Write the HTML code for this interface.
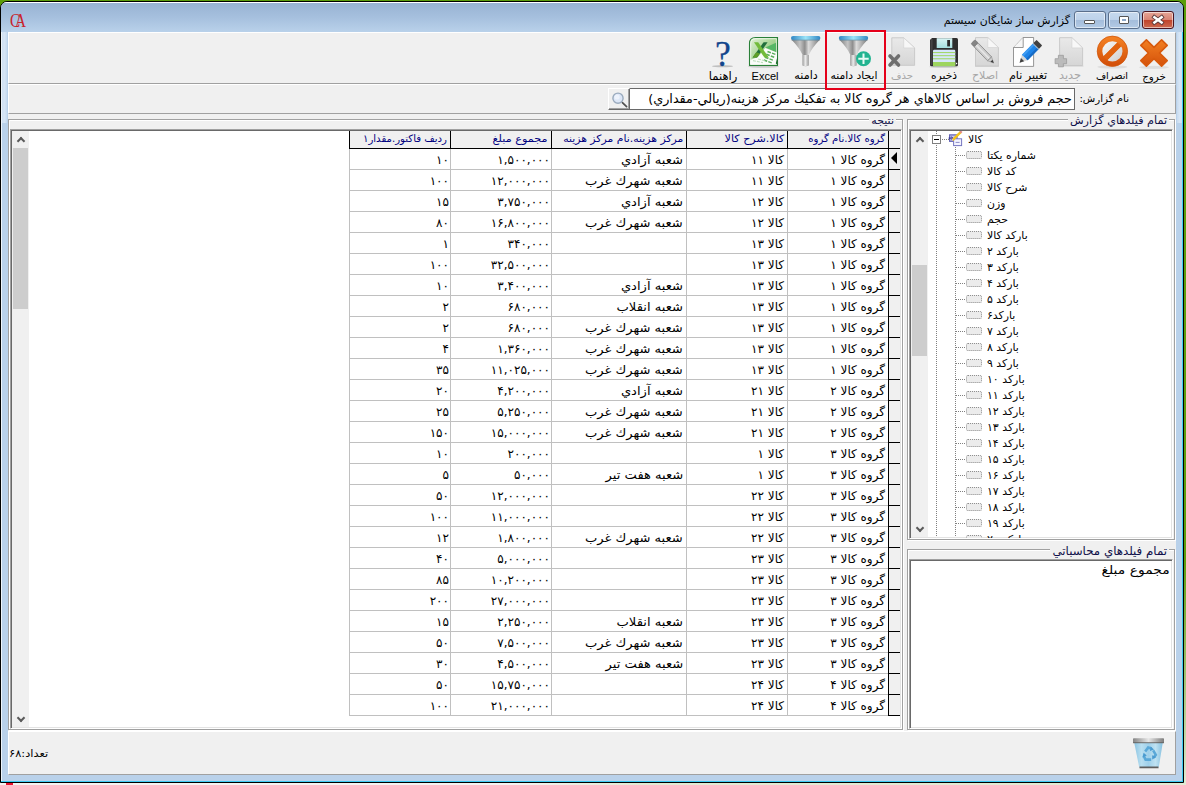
<!DOCTYPE html>
<html lang="fa"><head><meta charset="utf-8"><title>گزارش ساز شايگان سيستم</title>
<style>
html,body{margin:0;padding:0}
body{width:1186px;height:785px;overflow:hidden;position:relative;background:linear-gradient(#5b9d0a 0,#5b9d0a 560px,#cfe0bb 760px,#e2ebd5 785px);font-family:"DejaVu Sans","Liberation Sans",sans-serif;font-size:10.8px;color:#000;direction:rtl}
div,span,i,b,svg{position:absolute;box-sizing:border-box}
i,b{display:block;font-style:normal}
.win{left:0;top:1px;width:1184px;height:782px;background:#b9d1ea;border:1px solid #000;border-radius:7px 7px 0 0;overflow:hidden;box-shadow:inset -1px -1px 0 #3ecbf3,inset 1px 0 0 rgba(255,255,255,.75)}
.cap{left:0;top:0;width:1182px;height:30px;background:linear-gradient(#98b3d3,#a6c0de 50%,#b9d1ea);border-top:1px solid #fff}
.cli{left:8px;top:32px;width:1168px;height:743px;background:#f0f0f0}
.ttl{right:116px;top:13px;font-size:10.9px;line-height:16px;white-space:nowrap}
.cb{top:11px;width:32px;height:18px;border:1px solid #5a6f8c;border-radius:3px;background:linear-gradient(#c6d9ee 0,#bdd2ea 48%,#a4bddb 52%,#b3cae5 100%);box-shadow:inset 0 0 0 1px rgba(255,255,255,.55)}
.cb.x{border-color:#4b1520;background:linear-gradient(#e5a597 0,#d98474 48%,#c0432b 52%,#cd6a50 100%)}
.sep{left:8px;width:1168px;height:2px;border-top:1px solid #a0a0a0;border-bottom:1px solid #fff}
.tl{top:69px;height:14px;line-height:14px;font-size:10.8px;white-space:nowrap;text-align:center;transform:translateX(50%)}
.tl.d{color:#a7a7a7}
.gb{border:1px solid #a0a0a0;box-shadow:inset 1px 1px 0 #fff,1px 1px 0 #fff}
.gbl{background:#f0f0f0;font-size:11px;line-height:14px;height:13px;white-space:nowrap;color:#10104a;padding:0 2px}
.grid{left:10px;top:129px;width:892px;height:600px;background:#fff;border:1px solid;border-color:#a0a0a0 #fff #fff #a0a0a0;box-shadow:inset 1px 1px 0 #696969,inset -1px -1px 0 #e3e3e3;overflow:hidden}
.grid>*{margin:1px}
.sb{width:17px;background:#f0f0f0}
.sb b{left:1px;width:15px;background:#cdcdcd}
.sb i{left:0;width:17px;height:17px}
.sb i.au{top:0}.sb i.ad{bottom:0}
.sb i::before{content:"";position:absolute;left:5.5px;width:4px;height:4px;border:solid #5a5a5a;border-width:2px 2px 0 0}
.sb i.au::before{top:7.2px;transform:rotate(-45deg)}
.sb i.ad::before{top:4.6px;transform:rotate(135deg)}
.hd{top:0;height:17px;background:#f0f0f0;border-right:0;box-shadow:1px 0 0 #000,0 1px 0 #000,1px 1px 0 #000;color:#000080;font-size:10.15px;line-height:16px;text-align:right;padding-right:3px;white-space:nowrap;overflow:hidden}
.hi{left:877px;width:11px;background:#f0f0f0;box-shadow:0 1px 0 #000,-1px 0 0 #000,-1px 1px 0 #000}
.r{left:337px;width:551px;height:21px;border-bottom:1px solid #c0c0c0}
.c{top:0;height:20px;line-height:22px;font-size:12px;white-space:nowrap;text-align:right;padding-right:3px;border-left:1px solid #c0c0c0;overflow:hidden}
.c5{left:0;width:101px}.c4{left:101px;width:101px}.c3{left:202px;width:135px}.c2{left:337px;width:101px}.c1{left:438px;width:101px}
.ind{left:539px;top:0;width:12px;height:21px;background:#f0f0f0;border-left:1px solid #000;border-bottom:1px solid #000}
.cur{left:2px;top:3px;width:0;height:0;border:6px solid transparent;border-right:6px solid #000;border-left:0}
.tree{left:909px;top:129px;width:264px;height:410px;background:#fff;border:1px solid;border-color:#a0a0a0 #fff #fff #a0a0a0;box-shadow:inset 1px 1px 0 #696969,inset -1px -1px 0 #e3e3e3;overflow:hidden}
.tree>*{margin:1px}
.tr{left:0;width:262px;height:16px}
.tt{top:1px;height:16px;line-height:16px;font-size:10.9px;white-space:nowrap;direction:rtl}
.vl{width:1px;background:repeating-linear-gradient(#808080 0,#808080 1px,transparent 1px,transparent 2px)}
.hl{top:8px;height:1px;background:repeating-linear-gradient(90deg,#808080 0,#808080 1px,transparent 1px,transparent 2px)}
.pm{left:21px;top:4px;width:9px;height:9px;border:1px solid #808080;background:#fff}
.pm::before{content:"";position:absolute;left:1px;top:3px;width:5px;height:1px;background:#000}
.fi{left:55px;top:4px;width:16px;height:8px;border:1px dotted #8f8f8f;border-radius:2px;background:#ececec}
.lb{left:909px;top:559px;width:264px;height:170px;background:#fff;border:1px solid;border-color:#a0a0a0 #fff #fff #a0a0a0;box-shadow:inset 1px 1px 0 #696969,inset -1px -1px 0 #e3e3e3}
.c4,.c5{letter-spacing:.85px;padding-right:1px}
.c3 u{display:inline-block;text-decoration:none;transform:scaleX(1.09);transform-origin:100% 50%}
.c2 s{text-decoration:none;letter-spacing:.9px}
.hx{display:inline-block;transform-origin:100% 50%}
.pn{left:8px;width:1168px;border:1px solid;border-color:#fff #a0a0a0 #a0a0a0 #fff}

</style></head>
<body>
<div class="win"><div class="cap"></div></div>
<div class="cli"></div>
<div style="left:10px;top:10.5px;font-family:'Liberation Serif',serif;font-size:19px;line-height:20px;color:#c8232c;direction:ltr;letter-spacing:-6.4px;transform:scaleX(.8);transform-origin:0 50%">CA</div>
<div class="ttl">گزارش ساز شايگان سيستم</div>
<div class="cb" style="left:1074px"><i style="left:9px;top:8px;width:11px;height:4px;background:#fff;border:1px solid #555;border-radius:1px"></i></div>
<div class="cb" style="left:1108px"><i style="left:10px;top:4px;width:10px;height:8px;background:#fff;border:1px solid #555;border-radius:1px"></i><i style="left:13px;top:7px;width:4px;height:2px;background:#8aa5c7;border:0"></i></div>
<div class="cb x" style="left:1142px"><svg width="14" height="12" viewBox="0 0 14 12" style="left:8px;top:2px"><path d="M3.4 3.2L10.6 8.6M10.6 3.2L3.4 8.6" stroke="#5a3a3a" stroke-width="4.2" stroke-linecap="square"/><path d="M3.4 3.2L10.6 8.6M10.6 3.2L3.4 8.6" stroke="#fff" stroke-width="2.5" stroke-linecap="square"/></svg></div>
<div class="pn" style="top:32px;height:52px"></div>
<div class="pn" style="top:84px;height:30px"></div>
<div class="pn" style="top:731px;height:44px"></div>
<div style="left:2px;top:32px;width:5px;height:91px;background:linear-gradient(90deg,#cfe0f2,#d6e5f5 50%,#c6daef)"></div><div style="left:1177px;top:32px;width:5px;height:91px;background:linear-gradient(90deg,#c6daef,#d6e5f5 50%,#cfe0f2)"></div>
<div class="tl" style="right:32px;font-size:10.27px">خروج</div>
<div class="tl" style="right:74px;font-size:9.79px">انصراف</div>
<div class="tl d" style="right:116px;font-size:11.3px">جديد</div>
<div class="tl" style="right:158px;font-size:11.12px">تغيير نام</div>
<div class="tl d" style="right:201px;font-size:11.06px">اصلاح</div>
<div class="tl" style="right:242px;font-size:10.66px">ذخيره</div>
<div class="tl d" style="right:284px;font-size:10.1px">حذف</div>
<div class="tl" style="right:332px;font-size:10.79px">ايجاد دامنه</div>
<div class="tl" style="right:380px;font-size:11.21px">دامنه</div>
<div class="tl" style="right:421px;font-family:'Liberation Sans',sans-serif;font-size:11px;direction:ltr">Excel</div>
<div class="tl" style="right:463px;font-size:11.61px">راهنما</div>
<div style="right:57px;top:92px;font-size:10.2px;line-height:14px;white-space:nowrap">نام گزارش:</div>
<div style="left:629px;top:88px;width:446px;height:22px;background:#fff;border:1px solid #696969;font-size:12.8px;line-height:19px;padding-right:2px;white-space:nowrap;overflow:hidden">حجم فروش بر اساس کالاهاي هر گروه کالا به تفکيك مرکز هزينه(ريالي-مقداري)</div>
<div style="left:608px;top:88px;width:22px;height:22px;background:#f0f0f0;border:1px solid;border-color:#fff #696969 #696969 #fff;box-shadow:inset -1px -1px 0 #a0a0a0"><svg width="20" height="20" viewBox="0 0 20 20" style="left:0;top:0"><path d="M13.4 13.6L17.6 17.6" stroke="#505050" stroke-width="1.7" stroke-linecap="round"/><circle cx="9" cy="9.2" r="5.1" fill="#dde7f7" stroke="#9aaabd" stroke-width="1.4"/><circle cx="8" cy="8" r="2.6" fill="#eef3fc"/></svg></div>
<div style="left:825px;top:30px;width:61px;height:60px;border:2px solid #e5001a"></div>
<svg width="480" height="40" viewBox="700 32 480 40" style="left:700px;top:32px;direction:ltr">
<defs>
<linearGradient id="og" x1="0" y1="0" x2="0" y2="1"><stop offset="0" stop-color="#f27f22"/><stop offset="1" stop-color="#d4510a"/></linearGradient>
<linearGradient id="wg" x1="0" y1="0" x2="1" y2="1"><stop offset="0" stop-color="#fff"/><stop offset="1" stop-color="#c9c9c9"/></linearGradient>
<linearGradient id="dg" x1="0" y1="0" x2="0" y2="1"><stop offset="0" stop-color="#e9e9e9"/><stop offset="1" stop-color="#d6d6d6"/></linearGradient>
<linearGradient id="fg" x1="0" y1="0" x2="1" y2="0"><stop offset="0" stop-color="#7c7c7c"/><stop offset=".3" stop-color="#c4c4c4"/><stop offset=".47" stop-color="#8e8e8e"/><stop offset=".6" stop-color="#dcdcdc"/><stop offset="1" stop-color="#7a7a7a"/></linearGradient>
<linearGradient id="sg" x1="0" y1="0" x2="1" y2="0"><stop offset="0" stop-color="#a0a0a0"/><stop offset=".45" stop-color="#ebebeb"/><stop offset="1" stop-color="#9a9a9a"/></linearGradient>
<linearGradient id="bg" x1="0" y1="0" x2="1" y2="0"><stop offset="0" stop-color="#2f86c4"/><stop offset=".5" stop-color="#9be4f8"/><stop offset="1" stop-color="#2f86c4"/></linearGradient>
<linearGradient id="xg" x1="0" y1="0" x2="1" y2="1"><stop offset="0" stop-color="#e4f3da"/><stop offset=".55" stop-color="#9fd08b"/><stop offset="1" stop-color="#4f9a45"/></linearGradient>
<linearGradient id="cg" x1="0" y1="0" x2="0" y2="1"><stop offset="0" stop-color="#d9f4f4"/><stop offset="1" stop-color="#a5dede"/></linearGradient>
</defs>
<!-- exit X -->
<ellipse cx="1154" cy="67.3" rx="15" ry="1.6" fill="#000" opacity=".08"/>
<path transform="translate(1140.3 39.3)" d="M6.1 .5L13.7 8.1L21.3 .5L26.9 6.1L19.3 13.7L26.9 21.3L21.3 26.9L13.7 19.3L6.1 26.9L.5 21.3L8.1 13.7L.5 6.1Z" fill="url(#og)" stroke="#d8590c" stroke-width="1.6" stroke-linejoin="round"/>
<!-- cancel -->
<ellipse cx="1112.4" cy="67" rx="15" ry="1.6" fill="#000" opacity=".08"/>
<circle cx="1112.4" cy="51.3" r="12.6" fill="url(#wg)"/>
<path d="M1103.8 59.9L1121 42.7" stroke="url(#og)" stroke-width="5.4"/>
<path d="M1103.8 59.9L1121 42.7" stroke="#e1620f" stroke-width="5.4"/>
<circle cx="1112.4" cy="51.3" r="12.7" fill="none" stroke="url(#og)" stroke-width="5.2"/>
<circle cx="1112.4" cy="51.3" r="15.2" fill="none" stroke="#cf540b" stroke-width=".7"/>
<!-- new (disabled) -->
<path d="M1059.6 37.7L1071.9 37.7L1082.6 47.9L1082.6 65.5L1059.6 65.5Z" fill="url(#dg)" stroke="#c6c6c6" stroke-width=".9"/>
<path d="M1071.9 37.7L1071.9 47.9L1082.6 47.9Z" fill="#f8f8f8" stroke="#d0d0d0" stroke-width=".6"/>
<rect x="1059" y="65.6" width="24.4" height="1" fill="#c9c9c9" opacity=".7"/>
<path d="M1058.4 55.3L1063.4 55.3L1063.4 58.7L1066.6 58.7L1066.6 63.7L1063.4 63.7L1063.4 66.8L1058.4 66.8L1058.4 63.7L1055.1 63.7L1055.1 58.7L1058.4 58.7Z" fill="#bbb" stroke="#9c9c9c" stroke-width=".8" stroke-linejoin="round"/>
<!-- rename -->
<path d="M1023.2 37.5L1033.6 37.5L1033.6 66.4L1013.5 66.4L1013.5 47.5Z" fill="#fff" stroke="#757575" stroke-width=".75"/>
<path d="M1023.2 37.5L1023.2 47.5L1013.5 47.5" fill="#f6f6f6" stroke="#757575" stroke-width=".75"/>
<g transform="translate(1019.6 62.7) rotate(-45.3)"><path d="M0 0L7.4 -4L7.4 4Z" fill="#d6d6d6"/><path d="M0 0L4.2 -2.3L4.2 2.3Z" fill="#404040"/><rect x="7.4" y="-4" width="15.4" height="8" fill="#1e84e8"/><rect x="7.4" y="-4" width="15.4" height="2.4" fill="#3f9cf2"/><rect x="7.4" y="1.8" width="15.4" height="2.2" fill="#176bc6"/><rect x="22.6" y="-4" width="1.2" height="8" fill="#9fb4c8"/><rect x="23.6" y="-4" width="4.6" height="8" rx=".8" fill="#414141"/></g>
<!-- edit (disabled) -->
<path d="M975.5 37.6L987.8 37.6L998.4 47.5L998.4 66L975.5 66Z" fill="url(#dg)" stroke="#c6c6c6" stroke-width=".9"/>
<path d="M987.8 37.6L987.8 47.5L998.4 47.5Z" fill="#f8f8f8" stroke="#d0d0d0" stroke-width=".6"/>
<rect x="975" y="66" width="24" height="1" fill="#c9c9c9" opacity=".7"/>
<g transform="translate(993.7 63.1) rotate(-134)"><path d="M0 0L6 -2.8L6 2.8Z" fill="#cfcfcf" stroke="#8a8a8a" stroke-width=".5"/><path d="M0 0L3.2 -1.5L3.2 1.5Z" fill="#3c3c3c"/><rect x="6" y="-2.8" width="19.6" height="5.6" fill="#cdcdcd" stroke="#7c7c7c" stroke-width=".7"/><rect x="6.4" y="-.9" width="19" height="1.6" fill="#e6e6e6"/><rect x="25.4" y="-2.8" width="4.4" height="5.6" rx="1.2" fill="#858585" stroke="#727272" stroke-width=".6"/></g>
<!-- save -->
<ellipse cx="944" cy="66.8" rx="15" ry="1.3" fill="#000" opacity=".12"/>
<path d="M932 38L956.5 38Q958 38 958 39.5L958 64.7Q958 66.2 956.5 66.2L931.5 66.2Q930 66.2 930 64.7L930 40Z" fill="#2e2e2e"/>
<rect x="930.6" y="39" width="2" height="26" fill="#555" opacity=".6"/>
<rect x="936.7" y="38.2" width="15.6" height="9.8" fill="url(#cg)"/>
<rect x="947.2" y="40" width="2.8" height="6.4" fill="#2b2b2b"/>
<rect x="933" y="49.8" width="22.3" height="16.4" rx="1.2" fill="#d6e6fa"/>
<rect x="933" y="52" width="22.3" height="1.1" fill="#a3d86c"/><rect x="933" y="55.1" width="22.3" height="1.1" fill="#a3d86c"/><rect x="933" y="58.2" width="22.3" height="1.1" fill="#a3d86c"/><rect x="933" y="62" width="22.3" height="4.2" fill="#9dd55f"/>
<rect x="956" y="62.8" width="1.2" height="1.4" fill="#fff"/>
<!-- delete (disabled) -->
<path d="M891.8 37.8L903.7 37.8L914.6 47.9L914.6 65.3L891.8 65.3Z" fill="url(#dg)" stroke="#c6c6c6" stroke-width=".9"/>
<path d="M903.7 37.8L903.7 47.9L914.6 47.9Z" fill="#f7f7f7" stroke="#d0d0d0" stroke-width=".6"/>
<path d="M890 56L898.5 65M898.5 56L890 65" stroke="#6e6e6e" stroke-width="3.6" stroke-linecap="round"/>
<!-- funnels -->
<g transform="translate(838.8 36)"><path d="M0.4 3.6L29 3.6Q21 12 17.8 19L17.8 29.4Q14.7 31 11.6 29.4L11.6 19Q8.4 12 0.4 3.6Z" fill="url(#fg)"/><path d="M11.6 19L17.8 19L17.8 29.4Q14.7 31 11.6 29.4Z" fill="url(#sg)"/><rect x="0" y="0" width="29.4" height="4.2" rx="2.1" fill="url(#bg)"/><rect x="0.5" y="3.6" width="28.4" height="1" fill="#6d7f8c" opacity=".6"/></g>
<circle cx="863.5" cy="58.8" r="7.5" fill="#22b491"/>
<path d="M863.5 53.6L863.5 64M858.3 58.8L868.7 58.8" stroke="#e9fbf5" stroke-width="2"/>
<g transform="translate(791 36)"><path d="M0.4 3.6L29 3.6Q21 12 17.8 19L17.8 29.4Q14.7 31 11.6 29.4L11.6 19Q8.4 12 0.4 3.6Z" fill="url(#fg)"/><path d="M11.6 19L17.8 19L17.8 29.4Q14.7 31 11.6 29.4Z" fill="url(#sg)"/><rect x="0" y="0" width="29.4" height="4.2" rx="2.1" fill="url(#bg)"/><rect x="0.5" y="3.6" width="28.4" height="1" fill="#6d7f8c" opacity=".6"/></g>
<!-- excel -->
<ellipse cx="763.5" cy="66.6" rx="15.5" ry="1.1" fill="#000" opacity=".16"/>
<path d="M755.5 37.5L777.5 37.5L777.5 65.4L749.5 65.4L749.5 43.5Q749.5 37.5 755.5 37.5Z" fill="url(#xg)" stroke="#2a8038" stroke-width="1.1"/>
<path d="M755.8 38.7L776.3 38.7L776.3 64.2L750.7 64.2L750.7 43.8Q750.7 38.7 755.8 38.7Z" fill="none" stroke="#fff" stroke-width=".9" opacity=".75"/>
<path d="M765.4 47.6L776 42.8L776 52Z" fill="#56b765"/>
<path d="M765.2 48.1L777 52.4L777 64.7L750.2 64.7L750.2 60L758 57Z" fill="#fbfdfa"/>
<path d="M767.5 51.5L776.5 54.8M766.3 54.3L775.3 57.6M765 57.2L774 60.5M763.8 60L772.8 63.3" stroke="#5aad5c" stroke-width="1.5" stroke-dasharray="3.6 1.2"/>
<path d="M753 60.6L763 62.6M758 59L766 61" stroke="#bfe0bd" stroke-width="1.1" stroke-dasharray="3 1"/>
<path d="M775.8 63.6L777.6 55.5L777.6 65Z" fill="#1e6e2c"/>
<path d="M763.6 42.2L767.6 42.2L757 57.6L752.6 57.6Z" fill="#226f3c"/>
<path d="M752.6 57.6L757 57.6L759.8 53.6L756.2 52.3Z" fill="#5f9f28"/>
<path d="M754 42.2L758.2 42.2L768.8 57.6L764.4 57.6Z" fill="#72bb3a"/>
<!-- help -->
<ellipse cx="722.5" cy="66.2" rx="10.5" ry="1.1" fill="#000" opacity=".2"/>
<text x="715" y="65.8" font-family="'Liberation Serif',serif" font-size="35.5" fill="#12468c" stroke="#12468c" stroke-width=".3">?</text>
</svg>
<div class="gb" style="left:8px;top:119px;width:895px;height:611px"></div>
<div class="gbl" style="right:290px;top:114px">نتيجه</div>
<div class="grid">
<div class="sb" style="left:0;top:0;height:596px"><i class="au"></i><b style="top:17px;height:161px"></b><i class="ad"></i></div>
<div style="left:337px;top:0;width:1px;height:18px;background:#000"></div><div class="hd" style="left:338px;width:100px">رديف فاکتور.مقدار۱</div><div class="hd" style="left:439px;width:100px"><span class="hx" style="position:static;transform:scaleX(1.11)">مجموع مبلغ</span></div><div class="hd" style="left:540px;width:134px"><span class="hx" style="position:static;transform:scaleX(1.07)">مرکز هزينه.نام مرکز هزينه</span></div><div class="hd" style="left:675px;width:100px"><span class="hx" style="position:static;transform:scaleX(1.1)">کالا.شرح کالا</span></div><div class="hd" style="left:776px;width:100px">گروه کالا.نام گروه</div><div class="hi" style="top:0;height:17px"></div>
<div class="r" style="top:18px"><span class="c c5">۱۰</span><span class="c c4">۱,۵۰۰,۰۰۰</span><span class="c c3"><u style="position:static">شعبه آزادي</u></span><span class="c c2">کالا <s style="position:static">۱۱</s></span><span class="c c1">گروه کالا ۱</span><span class="ind"><i class="cur"></i></span></div>
<div class="r" style="top:39px"><span class="c c5">۱۰۰</span><span class="c c4">۱۲,۰۰۰,۰۰۰</span><span class="c c3"><u style="position:static">شعبه شهرك غرب</u></span><span class="c c2">کالا <s style="position:static">۱۱</s></span><span class="c c1">گروه کالا ۱</span><span class="ind"></span></div>
<div class="r" style="top:60px"><span class="c c5">۱۵</span><span class="c c4">۳,۷۵۰,۰۰۰</span><span class="c c3"><u style="position:static">شعبه آزادي</u></span><span class="c c2">کالا <s style="position:static">۱۲</s></span><span class="c c1">گروه کالا ۱</span><span class="ind"></span></div>
<div class="r" style="top:81px"><span class="c c5">۸۰</span><span class="c c4">۱۶,۸۰۰,۰۰۰</span><span class="c c3"><u style="position:static">شعبه شهرك غرب</u></span><span class="c c2">کالا <s style="position:static">۱۲</s></span><span class="c c1">گروه کالا ۱</span><span class="ind"></span></div>
<div class="r" style="top:102px"><span class="c c5">۱</span><span class="c c4">۳۴۰,۰۰۰</span><span class="c c3"></span><span class="c c2">کالا <s style="position:static">۱۳</s></span><span class="c c1">گروه کالا ۱</span><span class="ind"></span></div>
<div class="r" style="top:123px"><span class="c c5">۱۰۰</span><span class="c c4">۳۲,۵۰۰,۰۰۰</span><span class="c c3"></span><span class="c c2">کالا <s style="position:static">۱۳</s></span><span class="c c1">گروه کالا ۱</span><span class="ind"></span></div>
<div class="r" style="top:144px"><span class="c c5">۱۰</span><span class="c c4">۳,۴۰۰,۰۰۰</span><span class="c c3"><u style="position:static">شعبه آزادي</u></span><span class="c c2">کالا <s style="position:static">۱۳</s></span><span class="c c1">گروه کالا ۱</span><span class="ind"></span></div>
<div class="r" style="top:165px"><span class="c c5">۲</span><span class="c c4">۶۸۰,۰۰۰</span><span class="c c3"><u style="position:static">شعبه انقلاب</u></span><span class="c c2">کالا <s style="position:static">۱۳</s></span><span class="c c1">گروه کالا ۱</span><span class="ind"></span></div>
<div class="r" style="top:186px"><span class="c c5">۲</span><span class="c c4">۶۸۰,۰۰۰</span><span class="c c3"><u style="position:static">شعبه شهرك غرب</u></span><span class="c c2">کالا <s style="position:static">۱۳</s></span><span class="c c1">گروه کالا ۱</span><span class="ind"></span></div>
<div class="r" style="top:207px"><span class="c c5">۴</span><span class="c c4">۱,۳۶۰,۰۰۰</span><span class="c c3"><u style="position:static">شعبه شهرك غرب</u></span><span class="c c2">کالا <s style="position:static">۱۳</s></span><span class="c c1">گروه کالا ۱</span><span class="ind"></span></div>
<div class="r" style="top:228px"><span class="c c5">۳۵</span><span class="c c4">۱۱,۰۲۵,۰۰۰</span><span class="c c3"><u style="position:static">شعبه شهرك غرب</u></span><span class="c c2">کالا <s style="position:static">۱۳</s></span><span class="c c1">گروه کالا ۱</span><span class="ind"></span></div>
<div class="r" style="top:249px"><span class="c c5">۲۰</span><span class="c c4">۴,۲۰۰,۰۰۰</span><span class="c c3"><u style="position:static">شعبه آزادي</u></span><span class="c c2">کالا <s style="position:static">۲۱</s></span><span class="c c1">گروه کالا ۲</span><span class="ind"></span></div>
<div class="r" style="top:270px"><span class="c c5">۲۵</span><span class="c c4">۵,۲۵۰,۰۰۰</span><span class="c c3"><u style="position:static">شعبه شهرك غرب</u></span><span class="c c2">کالا <s style="position:static">۲۱</s></span><span class="c c1">گروه کالا ۲</span><span class="ind"></span></div>
<div class="r" style="top:291px"><span class="c c5">۱۵۰</span><span class="c c4">۱۵,۰۰۰,۰۰۰</span><span class="c c3"><u style="position:static">شعبه شهرك غرب</u></span><span class="c c2">کالا <s style="position:static">۲۱</s></span><span class="c c1">گروه کالا ۲</span><span class="ind"></span></div>
<div class="r" style="top:312px"><span class="c c5">۱۰</span><span class="c c4">۲۰۰,۰۰۰</span><span class="c c3"></span><span class="c c2">کالا <s style="position:static">۱</s></span><span class="c c1">گروه کالا ۳</span><span class="ind"></span></div>
<div class="r" style="top:333px"><span class="c c5">۵</span><span class="c c4">۵۰,۰۰۰</span><span class="c c3"><u style="position:static">شعبه هفت تير</u></span><span class="c c2">کالا <s style="position:static">۱</s></span><span class="c c1">گروه کالا ۳</span><span class="ind"></span></div>
<div class="r" style="top:354px"><span class="c c5">۵۰</span><span class="c c4">۱۲,۰۰۰,۰۰۰</span><span class="c c3"></span><span class="c c2">کالا <s style="position:static">۲۲</s></span><span class="c c1">گروه کالا ۳</span><span class="ind"></span></div>
<div class="r" style="top:375px"><span class="c c5">۱۰۰</span><span class="c c4">۱۱,۰۰۰,۰۰۰</span><span class="c c3"></span><span class="c c2">کالا <s style="position:static">۲۲</s></span><span class="c c1">گروه کالا ۳</span><span class="ind"></span></div>
<div class="r" style="top:396px"><span class="c c5">۱۲</span><span class="c c4">۱,۸۰۰,۰۰۰</span><span class="c c3"><u style="position:static">شعبه شهرك غرب</u></span><span class="c c2">کالا <s style="position:static">۲۲</s></span><span class="c c1">گروه کالا ۳</span><span class="ind"></span></div>
<div class="r" style="top:417px"><span class="c c5">۴۰</span><span class="c c4">۵,۰۰۰,۰۰۰</span><span class="c c3"></span><span class="c c2">کالا <s style="position:static">۲۳</s></span><span class="c c1">گروه کالا ۳</span><span class="ind"></span></div>
<div class="r" style="top:438px"><span class="c c5">۸۵</span><span class="c c4">۱۰,۲۰۰,۰۰۰</span><span class="c c3"></span><span class="c c2">کالا <s style="position:static">۲۳</s></span><span class="c c1">گروه کالا ۳</span><span class="ind"></span></div>
<div class="r" style="top:459px"><span class="c c5">۲۰۰</span><span class="c c4">۲۷,۰۰۰,۰۰۰</span><span class="c c3"></span><span class="c c2">کالا <s style="position:static">۲۳</s></span><span class="c c1">گروه کالا ۳</span><span class="ind"></span></div>
<div class="r" style="top:480px"><span class="c c5">۱۵</span><span class="c c4">۲,۲۵۰,۰۰۰</span><span class="c c3"><u style="position:static">شعبه انقلاب</u></span><span class="c c2">کالا <s style="position:static">۲۳</s></span><span class="c c1">گروه کالا ۳</span><span class="ind"></span></div>
<div class="r" style="top:501px"><span class="c c5">۵۰</span><span class="c c4">۷,۵۰۰,۰۰۰</span><span class="c c3"><u style="position:static">شعبه شهرك غرب</u></span><span class="c c2">کالا <s style="position:static">۲۳</s></span><span class="c c1">گروه کالا ۳</span><span class="ind"></span></div>
<div class="r" style="top:522px"><span class="c c5">۳۰</span><span class="c c4">۴,۵۰۰,۰۰۰</span><span class="c c3"><u style="position:static">شعبه هفت تير</u></span><span class="c c2">کالا <s style="position:static">۲۳</s></span><span class="c c1">گروه کالا ۳</span><span class="ind"></span></div>
<div class="r" style="top:543px"><span class="c c5">۵۰</span><span class="c c4">۱۵,۷۵۰,۰۰۰</span><span class="c c3"></span><span class="c c2">کالا <s style="position:static">۲۴</s></span><span class="c c1">گروه کالا ۴</span><span class="ind"></span></div>
<div class="r" style="top:564px"><span class="c c5">۱۰۰</span><span class="c c4">۲۱,۰۰۰,۰۰۰</span><span class="c c3"></span><span class="c c2">کالا <s style="position:static">۲۴</s></span><span class="c c1">گروه کالا ۴</span><span class="ind"></span></div>
</div>
<div class="gb" style="left:907px;top:119px;width:268px;height:421px"></div>
<div class="gbl" style="right:17px;top:114px;font-size:11.2px">تمام فيلدهاي گزارش</div>
<div class="tree">
<div class="sb" style="left:0;top:0;height:406px"><i class="au"></i><b style="top:134px;height:91px"></b><i class="ad"></i></div>
<div class="vl" style="left:25px;top:0;height:406px"></div><div class="vl" style="left:44px;top:16px;height:390px"></div>
<div class="tr" style="top:0"><i class="pm"></i><i class="hl" style="left:31px;width:8px"></i><svg width="16" height="16" viewBox="0 0 16 16" style="left:37px;top:0"><rect x="1.5" y="3.8" width="7.6" height="6.6" fill="#9c9cd8" stroke="#6464b4"/><rect x="2.6" y="4.9" width="5.4" height="4.4" fill="#c9c9ee"/><rect x="5.6" y="7.8" width="8" height="6.8" fill="#f4f4ff" stroke="#7676c0"/><path d="M7.6 11.4H11.6" stroke="#8c8cc8" stroke-width="1"/><path d="M0.6 7.1H4.6M3.3 5.8L4.8 7.1L3.3 8.4" stroke="#20208c" stroke-width="1" fill="none"/><path d="M12.9 0.9L4.6 9.2" stroke="#f2c21a" stroke-width="2.4"/><path d="M13.6 0.2L12.2 1.6" stroke="#e38a8a" stroke-width="2.4"/><path d="M4.2 9.8L5.6 8.2L3.6 7.6Z" fill="#e6cfa2"/></svg>
<span class="tt" style="left:57px">کالا</span></div>
<div class="tr" style="top:16px"><i class="hl" style="left:45px;width:10px"></i><i class="fi"></i><span class="tt" style="left:76px">شماره يکتا</span></div>
<div class="tr" style="top:32px"><i class="hl" style="left:45px;width:10px"></i><i class="fi"></i><span class="tt" style="left:76px">کد کالا</span></div>
<div class="tr" style="top:48px"><i class="hl" style="left:45px;width:10px"></i><i class="fi"></i><span class="tt" style="left:76px">شرح کالا</span></div>
<div class="tr" style="top:64px"><i class="hl" style="left:45px;width:10px"></i><i class="fi"></i><span class="tt" style="left:76px">وزن</span></div>
<div class="tr" style="top:80px"><i class="hl" style="left:45px;width:10px"></i><i class="fi"></i><span class="tt" style="left:76px">حجم</span></div>
<div class="tr" style="top:96px"><i class="hl" style="left:45px;width:10px"></i><i class="fi"></i><span class="tt" style="left:76px">بارکد کالا</span></div>
<div class="tr" style="top:112px"><i class="hl" style="left:45px;width:10px"></i><i class="fi"></i><span class="tt" style="left:76px">بارکد ۲</span></div>
<div class="tr" style="top:128px"><i class="hl" style="left:45px;width:10px"></i><i class="fi"></i><span class="tt" style="left:76px">بارکد ۳</span></div>
<div class="tr" style="top:144px"><i class="hl" style="left:45px;width:10px"></i><i class="fi"></i><span class="tt" style="left:76px">بارکد ۴</span></div>
<div class="tr" style="top:160px"><i class="hl" style="left:45px;width:10px"></i><i class="fi"></i><span class="tt" style="left:76px">بارکد ۵</span></div>
<div class="tr" style="top:176px"><i class="hl" style="left:45px;width:10px"></i><i class="fi"></i><span class="tt" style="left:76px">بارکد۶</span></div>
<div class="tr" style="top:192px"><i class="hl" style="left:45px;width:10px"></i><i class="fi"></i><span class="tt" style="left:76px">بارکد ۷</span></div>
<div class="tr" style="top:208px"><i class="hl" style="left:45px;width:10px"></i><i class="fi"></i><span class="tt" style="left:76px">بارکد ۸</span></div>
<div class="tr" style="top:224px"><i class="hl" style="left:45px;width:10px"></i><i class="fi"></i><span class="tt" style="left:76px">بارکد ۹</span></div>
<div class="tr" style="top:240px"><i class="hl" style="left:45px;width:10px"></i><i class="fi"></i><span class="tt" style="left:76px">بارکد ۱۰</span></div>
<div class="tr" style="top:256px"><i class="hl" style="left:45px;width:10px"></i><i class="fi"></i><span class="tt" style="left:76px">بارکد ۱۱</span></div>
<div class="tr" style="top:272px"><i class="hl" style="left:45px;width:10px"></i><i class="fi"></i><span class="tt" style="left:76px">بارکد ۱۲</span></div>
<div class="tr" style="top:288px"><i class="hl" style="left:45px;width:10px"></i><i class="fi"></i><span class="tt" style="left:76px">بارکد ۱۳</span></div>
<div class="tr" style="top:304px"><i class="hl" style="left:45px;width:10px"></i><i class="fi"></i><span class="tt" style="left:76px">بارکد ۱۴</span></div>
<div class="tr" style="top:320px"><i class="hl" style="left:45px;width:10px"></i><i class="fi"></i><span class="tt" style="left:76px">بارکد ۱۵</span></div>
<div class="tr" style="top:336px"><i class="hl" style="left:45px;width:10px"></i><i class="fi"></i><span class="tt" style="left:76px">بارکد ۱۶</span></div>
<div class="tr" style="top:352px"><i class="hl" style="left:45px;width:10px"></i><i class="fi"></i><span class="tt" style="left:76px">بارکد ۱۷</span></div>
<div class="tr" style="top:368px"><i class="hl" style="left:45px;width:10px"></i><i class="fi"></i><span class="tt" style="left:76px">بارکد ۱۸</span></div>
<div class="tr" style="top:384px"><i class="hl" style="left:45px;width:10px"></i><i class="fi"></i><span class="tt" style="left:76px">بارکد ۱۹</span></div>
<div class="tr" style="top:400px"><i class="hl" style="left:45px;width:10px"></i><i class="fi"></i><span class="tt" style="left:76px">بارکد ۲۰</span></div>
</div>
<div class="gb" style="left:907px;top:549px;width:268px;height:181px"></div>
<div class="gbl" style="right:17px;top:544px;font-size:11.8px">تمام فيلدهاي محاسباتي</div>
<div class="lb"><div style="right:2px;top:2px;font-size:12px;line-height:16px;white-space:nowrap;transform:scaleX(1.16);transform-origin:100% 50%">مجموع مبلغ</div></div>
<div style="left:8.5px;top:746px;font-size:10.4px;line-height:14px;white-space:nowrap;transform:scaleX(1.1);transform-origin:0 50%">تعداد:۶۸</div>
<svg width="34" height="34" viewBox="1131 737 34 34" style="left:1131px;top:737px;direction:ltr"><!-- trash -->
<defs><linearGradient id="lg" x1="0" y1="0" x2="1" y2="0"><stop offset="0" stop-color="#858585"/><stop offset=".5" stop-color="#e6e6e6"/><stop offset="1" stop-color="#7d7d7d"/></linearGradient>
<linearGradient id="tg" x1="0" y1="0" x2="1" y2="0"><stop offset="0" stop-color="#8cc4e2"/><stop offset=".25" stop-color="#b9dff1"/><stop offset=".5" stop-color="#9fd0ea"/><stop offset=".75" stop-color="#bfe2f2"/><stop offset="1" stop-color="#86c0df"/></linearGradient></defs>
<path d="M1134.3 743L1162.7 743L1158.8 767.2L1139.2 767.2Z" fill="url(#tg)"/>
<path d="M1139.6 766.6L1158.4 766.6L1158.6 768.2L1139.4 768.2Z" fill="#5e5e5e"/>
<rect x="1133" y="738.2" width="31" height="4.9" rx=".8" fill="url(#lg)"/>
<rect x="1133" y="742.3" width="31" height=".9" fill="#5f5f5f"/>
<g fill="none" stroke="#5aa8d8" stroke-width="2.6"><path d="M1145.2 751.6L1148.2 747.4L1151.6 748.4"/><path d="M1153.2 750.4L1155.8 754.8L1153.6 757.8"/><path d="M1151.2 759.6L1145.6 759.6L1143.8 756.2"/></g>
<path d="M1150.6 746.4L1154 749.6L1150 751Z M1156.4 757L1152.2 759.4L1152.2 755.2Z M1142.4 757.6L1143.6 752.8L1146.8 755.6Z" fill="#4b9bd0"/>
</svg>
<div style="left:0;top:783px;width:640px;height:2px;background:linear-gradient(90deg,#f4f4f2 0,#f4f4f2 80%,rgba(244,244,242,0))"></div><div style="left:6px;top:783px;width:7px;height:2px;background:#e8112d"></div>
</body></html>
